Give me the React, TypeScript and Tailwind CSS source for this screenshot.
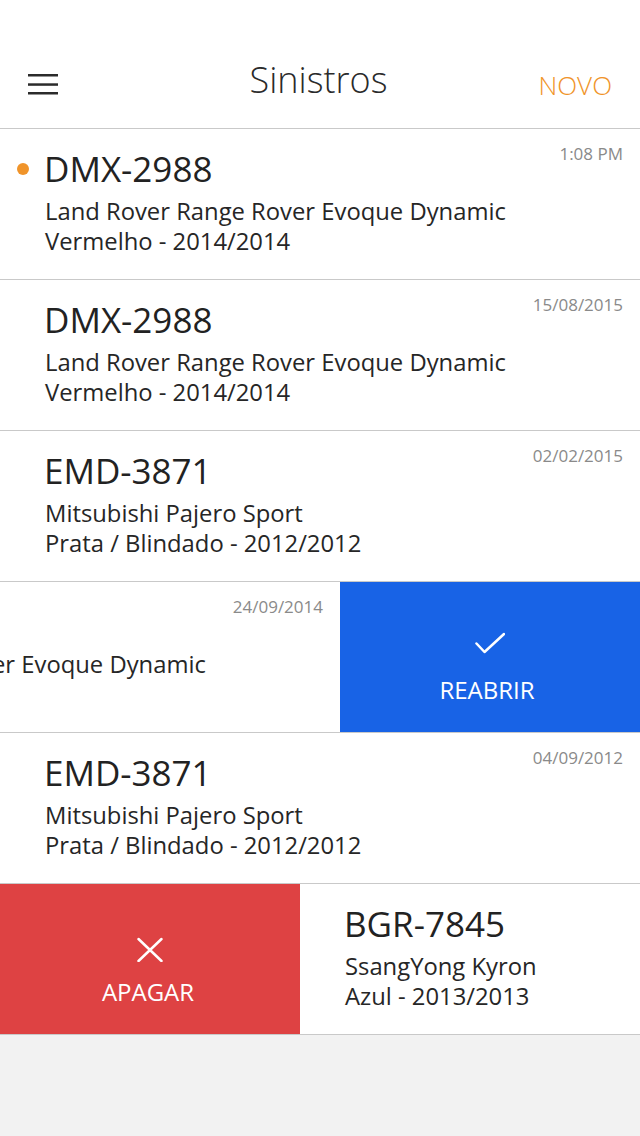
type Claim = {
  plate: string
  model: string
  detail: string
  date: string
  unread?: boolean
}

const claims: Claim[] = [
  { plate: 'DMX-2988', model: 'Land Rover Range Rover Evoque Dynamic', detail: 'Vermelho - 2014/2014', date: '1:08 PM', unread: true },
  { plate: 'DMX-2988', model: 'Land Rover Range Rover Evoque Dynamic', detail: 'Vermelho - 2014/2014', date: '15/08/2015' },
  { plate: 'EMD-3871', model: 'Mitsubishi Pajero Sport', detail: 'Prata / Blindado - 2012/2012', date: '02/02/2015' },
  { plate: 'DMX-2988', model: 'Land Rover Range Rover Evoque Dynamic', detail: 'Vermelho - 2014/2014', date: '24/09/2014' },
  { plate: 'EMD-3871', model: 'Mitsubishi Pajero Sport', detail: 'Prata / Blindado - 2012/2012', date: '04/09/2012' },
  { plate: 'BGR-7845', model: 'SsangYong Kyron', detail: 'Azul - 2013/2013', date: '12/03/2012' },
]

const font = { fontFamily: '"Open Sans", "Liberation Sans", sans-serif' }

const ClaimBody = ({ c }: { c: Claim }) => {
  return (
    <div className="w-[640px] shrink-0 flex justify-between bg-white pl-[44px] pr-[17px]">
      <div className="pt-[20px]">
        <div className="flex items-center">
          {c.unread && <span className="-ml-[27px] mr-[15px] h-3 w-3 rounded-full bg-[#f0942a]"></span>}
          <span className="text-[35px] leading-[40px] text-[#222]">{c.plate}</span>
        </div>
        <div className="mt-[7px] pl-[1px] text-[23.8px] leading-[30px] text-[#262626] whitespace-nowrap">{c.model}</div>
        <div className="pl-[1px] text-[23.8px] leading-[30px] text-[#262626] whitespace-nowrap">{c.detail}</div>
      </div>
      <div className="pt-[15px] text-[17px] leading-[20px] text-[#8a8a8a]">{c.date}</div>
    </div>
  )
}

const Row = ({ c }: { c: Claim }) => (
  <div className="h-[151px] border-b border-[#c9c9c9] bg-white overflow-hidden flex">
    <ClaimBody c={c} />
  </div>
)

const App = () => {
  return (
    <div className="min-h-[1136px] w-[640px] bg-[#f2f2f2]" style={font}>
      {/* header */}
      <div className="h-[129px] border-b border-[#c9c9c9] bg-white grid grid-cols-[1fr_auto_1fr] items-start">
        <div className="pl-[28px] pt-[74px]">
          <svg width="30" height="21" viewBox="0 0 30 21" fill="#2b2b2b">
            <rect x="0" y="0" width="30" height="2.5" />
            <rect x="0" y="9.3" width="30" height="2.5" />
            <rect x="0" y="18" width="30" height="2.5" />
          </svg>
        </div>
        <div className="pt-[60px] -ml-[3px] text-[36px] leading-[40px] font-light text-[#2a2a2a]">Sinistros</div>
        <div className="pt-[70px] pr-[28px] text-right text-[26px] leading-[30px] font-light text-[#f0942a]">NOVO</div>
      </div>

      <Row c={claims[0]} />
      <Row c={claims[1]} />
      <Row c={claims[2]} />

      {/* swiped left, reveals reopen */}
      <div className="h-[151px] border-b border-[#c9c9c9] bg-white overflow-hidden flex">
        <div className="-ml-[300px] flex">
          <ClaimBody c={claims[3]} />
        </div>
        <div className="w-[300px] shrink-0 bg-[#1863e6] flex flex-col items-center pt-[48px] text-white">
          <svg width="30" height="30" viewBox="0 0 30 30" fill="none" stroke="white" strokeWidth="2.5" strokeLinecap="round" strokeLinejoin="round">
            <path d="M1.5 13.5 L9.5 22 L29 4" />
          </svg>
          <div className="mt-[15px] pr-[6px] text-[24px] leading-[30px]">REABRIR</div>
        </div>
      </div>

      <Row c={claims[4]} />

      {/* swiped right, reveals delete */}
      <div className="h-[151px] border-b border-[#c9c9c9] bg-white overflow-hidden flex">
        <div className="w-[300px] shrink-0 bg-[#de4243] flex flex-col items-center pt-[48px] text-white">
          <svg width="30" height="30" viewBox="0 0 30 30" fill="none" stroke="white" strokeWidth="2.5" strokeLinecap="round">
            <path d="M3.5 7 L26.5 29 M26.5 7 L3.5 29" />
          </svg>
          <div className="mt-[15px] pr-[4px] text-[24px] leading-[30px]">APAGAR</div>
        </div>
        <ClaimBody c={claims[5]} />
      </div>
    </div>
  )
}

export default App
